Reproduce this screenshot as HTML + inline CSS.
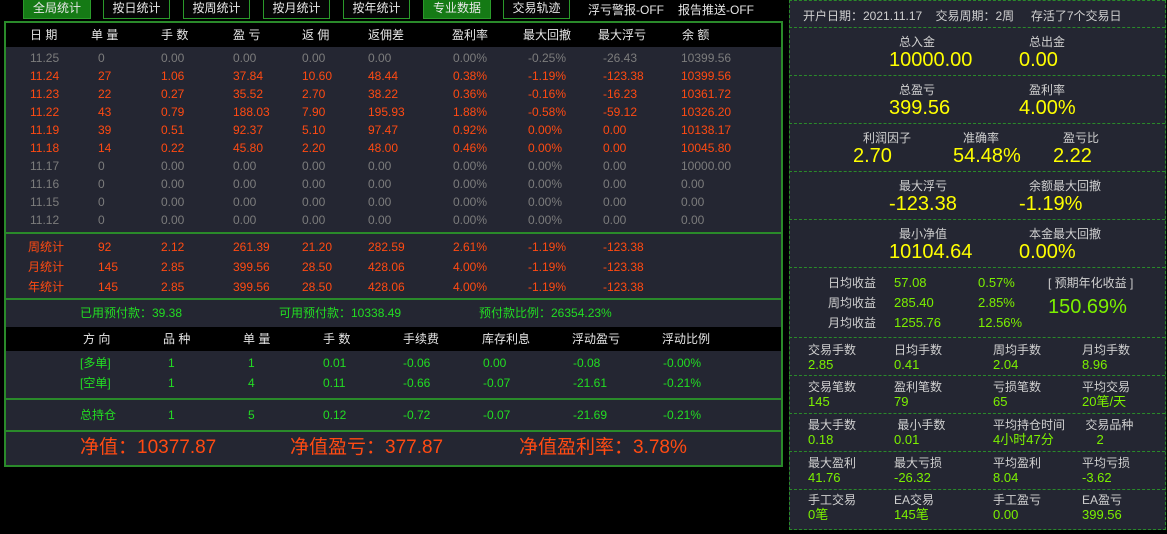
<!DOCTYPE html>
<html><head><meta charset="utf-8"><style>
*{margin:0;padding:0;box-sizing:border-box}
body{width:1167px;height:534px;background:#000;position:relative;overflow:hidden;font-family:"Liberation Sans","Noto Sans CJK SC",sans-serif;font-size:12px}
.a{position:absolute;white-space:nowrap;line-height:14px}
.btn{position:absolute;top:0;height:19px;border:1px solid #2a9a2a;border-top:none;color:#e8e8e8;font-size:12px;line-height:17px;text-align:center;background:#050505}
.g{color:#7c7c7c}.r{color:#ff4a12}.w{color:#e6e6e6}.gr{color:#22dd22}.y{color:#ffff00}.lg{color:#7cf000}.lb{color:#d0d0d0}
.hl{position:absolute;left:4px;width:779px;height:2px;background:#2a8a2a}
.dl{position:absolute;left:789px;width:376px;border-top:1px dashed #2a8a2a}
.big{font-size:20px;line-height:22px}
</style></head><body>
<div class="btn" style="left:23px;width:68px;background:#157a15">全局统计</div>
<div class="btn" style="left:103px;width:67px">按日统计</div>
<div class="btn" style="left:183px;width:67px">按周统计</div>
<div class="btn" style="left:263px;width:67px">按月统计</div>
<div class="btn" style="left:343px;width:67px">按年统计</div>
<div class="btn" style="left:423px;width:68px;background:#157a15">专业数据</div>
<div class="btn" style="left:503px;width:67px">交易轨迹</div>
<div class="a w" style="left:588px;top:3px">浮亏警报-OFF</div>
<div class="a w" style="left:678px;top:3px">报告推送-OFF</div>

<div style="position:absolute;left:4px;top:21px;width:779px;height:446px;border:2px solid #2a8a2a;background:#242632"></div>
<div style="position:absolute;left:6px;top:23px;width:775px;height:24px;background:#000"></div>
<div style="position:absolute;left:6px;top:327px;width:775px;height:24px;background:#000"></div>
<div class="hl" style="top:232px"></div>
<div class="hl" style="top:298px"></div>
<div class="hl" style="top:398px"></div>
<div class="hl" style="top:430px"></div>

<div id="L"></div>

<div style="position:absolute;left:789px;top:0;width:377px;height:530px;border:1px dashed #2a8a2a;border-top:none;background:#242632"></div>
<div class="dl" style="top:0"></div>
<div class="dl" style="top:27px"></div><div class="dl" style="top:75px"></div><div class="dl" style="top:123px"></div><div class="dl" style="top:171px"></div><div class="dl" style="top:219px"></div><div class="dl" style="top:267px"></div><div class="dl" style="top:337px"></div><div class="dl" style="top:375px"></div><div class="dl" style="top:413px"></div><div class="dl" style="top:451px"></div><div class="dl" style="top:489px"></div>
<div id="R"></div>
<script>
var h='';
function t(x,y,s,c,st){h+='<div class="a '+c+'" style="left:'+x+'px;top:'+(y-7)+'px;'+(st||'')+'">'+s+'</div>';}
var hx=[30,91,161,233,302,368,452,523,598,682];
var hd=['日 期','单 量','手 数','盈 亏','返 佣','返佣差','盈利率','最大回撤','最大浮亏','余 额'];
hd.forEach(function(s,i){t(hx[i],35,s,'w');});
var dx=[30,98,161,233,302,368,453,528,603,681];
var rows=[
['g','11.25','0','0.00','0.00','0.00','0.00','0.00%','-0.25%','-26.43','10399.56'],
['r','11.24','27','1.06','37.84','10.60','48.44','0.38%','-1.19%','-123.38','10399.56'],
['r','11.23','22','0.27','35.52','2.70','38.22','0.36%','-0.16%','-16.23','10361.72'],
['r','11.22','43','0.79','188.03','7.90','195.93','1.88%','-0.58%','-59.12','10326.20'],
['r','11.19','39','0.51','92.37','5.10','97.47','0.92%','0.00%','0.00','10138.17'],
['r','11.18','14','0.22','45.80','2.20','48.00','0.46%','0.00%','0.00','10045.80'],
['g','11.17','0','0.00','0.00','0.00','0.00','0.00%','0.00%','0.00','10000.00'],
['g','11.16','0','0.00','0.00','0.00','0.00','0.00%','0.00%','0.00','0.00'],
['g','11.15','0','0.00','0.00','0.00','0.00','0.00%','0.00%','0.00','0.00'],
['g','11.12','0','0.00','0.00','0.00','0.00','0.00%','0.00%','0.00','0.00']];
rows.forEach(function(r,j){for(var i=1;i<r.length;i++)t(dx[i-1],58+j*18,r[i],r[0]);});
var sm=[['周统计','92','2.12','261.39','21.20','282.59','2.61%','-1.19%','-123.38'],['月统计','145','2.85','399.56','28.50','428.06','4.00%','-1.19%','-123.38'],['年统计','145','2.85','399.56','28.50','428.06','4.00%','-1.19%','-123.38']];
sm.forEach(function(r,j){r.forEach(function(s,i){t(i==0?28:dx[i],247+j*20,s,'r');});});
t(80,313,'已用预付款：39.38','gr');t(279,313,'可用预付款：10338.49','gr');t(479,313,'预付款比例：26354.23%','gr');
var bx=[83,163,243,323,403,482,572,662];
['方 向','品 种','单 量','手 数','手续费','库存利息','浮动盈亏','浮动比例'].forEach(function(s,i){t(bx[i],339,s,'w');});
var cx=[80,168,248,323,403,483,573,663];
[['[多单]','1','1','0.01','-0.06','0.00','-0.08','-0.00%'],['[空单]','1','4','0.11','-0.66','-0.07','-21.61','-0.21%'],['总持仓','1','5','0.12','-0.72','-0.07','-21.69','-0.21%']].forEach(function(r,j){var y=[363,383,415][j];r.forEach(function(s,i){t(cx[i],y,s,'gr');});});
t(80,445,'净值：10377.87','r','font-size:19px;line-height:20px');
t(290,445,'净值盈亏：377.87','r','font-size:19px;line-height:20px');
t(519,445,'净值盈利率：3.78%','r','font-size:19px;line-height:20px');
document.getElementById('L').outerHTML=h;h='';
t(803,16,'开户日期：2021.11.17&nbsp;&nbsp;&nbsp;&nbsp;交易周期：2周&nbsp;&nbsp;&nbsp;&nbsp;&nbsp;存活了7个交易日','lb');
function blk(x,y,l,v){t(x,y,l,'lb');h+='<div class="a y big" style="left:'+(x-10)+'px;top:'+(y+7)+'px">'+v+'</div>';}
blk(899,42,'总入金','10000.00');blk(1029,42,'总出金','0.00');
blk(899,90,'总盈亏','399.56');blk(1029,90,'盈利率','4.00%');
blk(863,138,'利润因子','2.70');blk(963,138,'准确率','54.48%');blk(1063,138,'盈亏比','2.22');
blk(899,186,'最大浮亏','-123.38');blk(1029,186,'余额最大回撤','-1.19%');
blk(899,234,'最小净值','10104.64');blk(1029,234,'本金最大回撤','0.00%');
[['日均收益','57.08','0.57%'],['周均收益','285.40','2.85%'],['月均收益','1255.76','12.56%']].forEach(function(r,j){var y=283+j*20;t(828,y,r[0],'lb');t(894,y,r[1],'lg','font-size:13px');t(978,y,r[2],'lg','font-size:13px');});
t(1048,283,'[ 预期年化收益 ]','lb');
h+='<div class="a lg" style="left:1048px;top:296px;font-size:20px;line-height:22px">150.69%</div>';
var gx=[808,894,993,1082];
[[350,['交易手数','2.85'],['日均手数','0.41'],['周均手数','2.04'],['月均手数','8.96']],
[387,['交易笔数','145'],['盈利笔数','79'],['亏损笔数','65'],['平均交易','20笔/天']],
[425,['最大手数','0.18'],[' 最小手数','0.01'],['平均持仓时间','4小时47分'],[' 交易品种','&nbsp;&nbsp;&nbsp;&nbsp;2']],
[463,['最大盈利','41.76'],['最大亏损','-26.32'],['平均盈利','8.04'],['平均亏损','-3.62']],
[500,['手工交易','0笔'],['EA交易','145笔'],['手工盈亏','0.00'],['EA盈亏','399.56']]].forEach(function(r){for(var i=1;i<5;i++){t(gx[i-1],r[0],r[i][0].replace(' ','&nbsp;'),'lb');t(gx[i-1],r[0]+15,r[i][1],'lg','font-size:13px');}});
document.getElementById('R').outerHTML=h;
</script>
</body></html>
